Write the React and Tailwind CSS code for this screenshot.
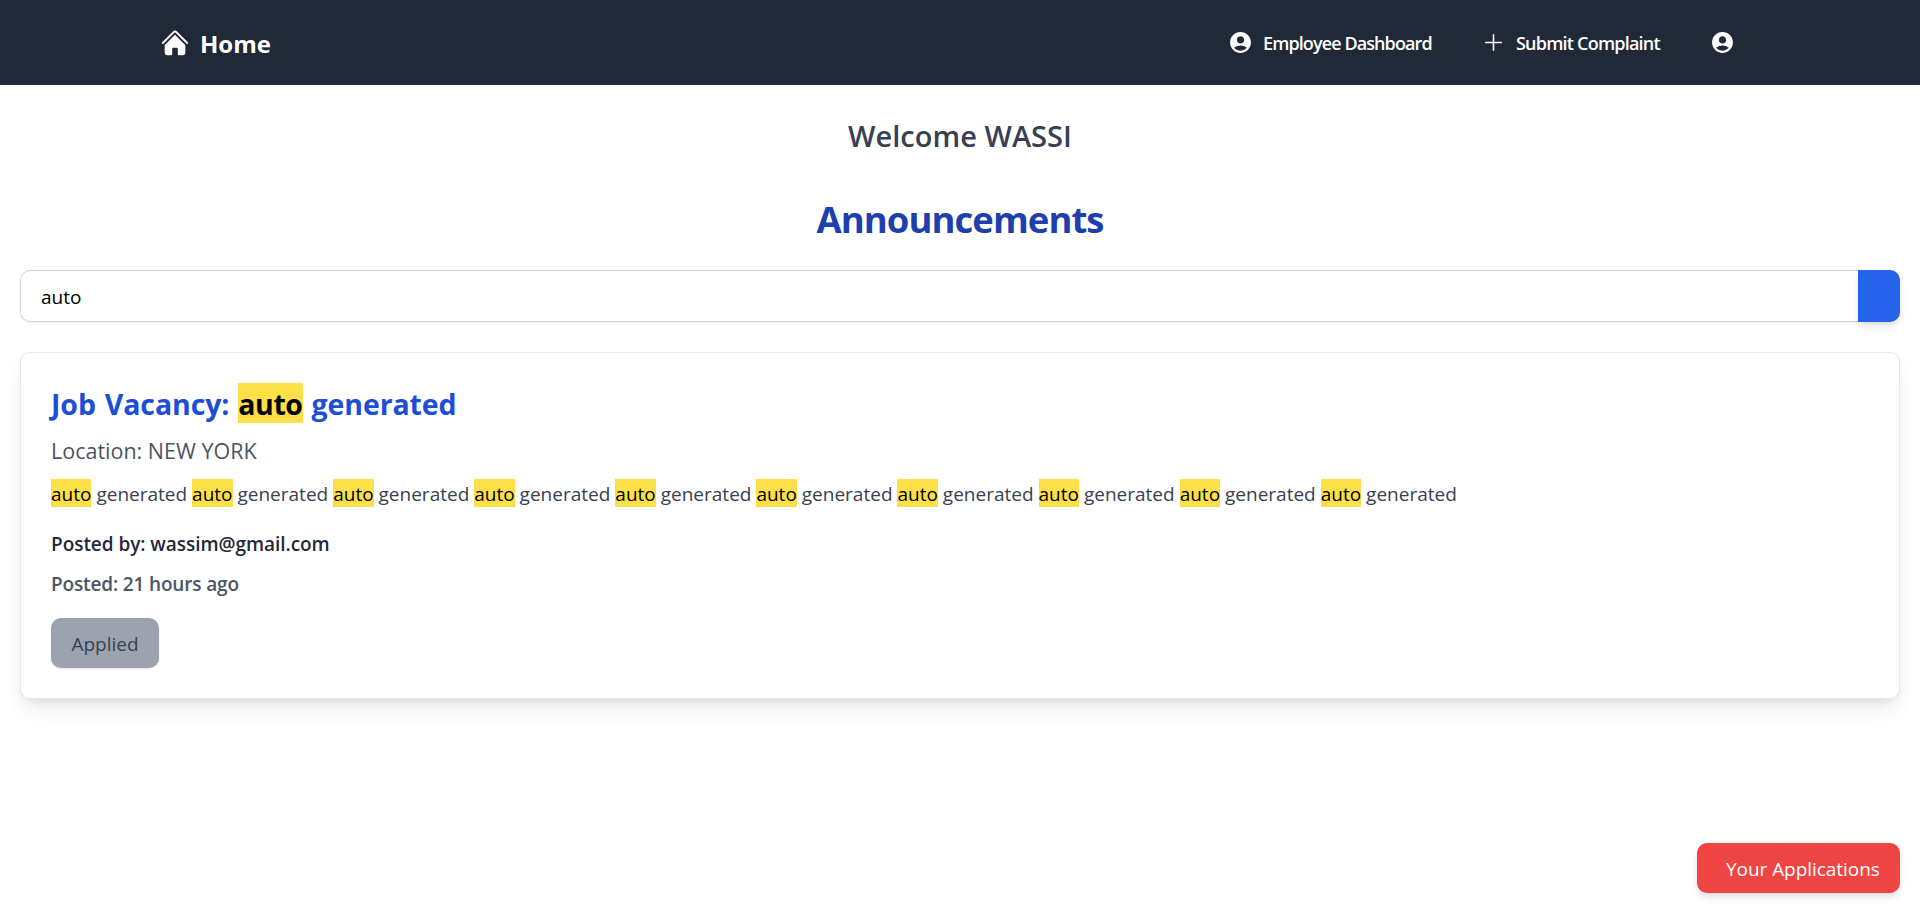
import { HiHome, HiOutlinePlus } from "react-icons/hi2";
import { MdAccountCircle } from "react-icons/md";

const Mark = ({ children }) => (
  <mark className="bg-[#fde047] pt-[2px] text-black">{children}</mark>
);

const repeats = Array.from({ length: 10 }, (_, i) => i);

export default function App() {
  return (
    <div className="flex min-h-[912px] flex-col bg-white font-['Open_Sans','Noto_Sans',sans-serif] text-[19px] leading-[30px]">
      <nav className="flex h-[85px] items-center justify-between bg-[#1f2937] pr-[185px] pl-[160px] text-white">
        <a className="flex items-center gap-[10px] pt-px">
          <HiHome className="size-[30px]" />
          <span className="text-[24px] leading-[35px] font-bold">Home</span>
        </a>
        <div className="flex items-center text-[18px] font-semibold">
          <a className="flex items-center gap-[10px]">
            <MdAccountCircle className="size-[25px]" />
            <span className="w-[170px] pt-px tracking-[-0.9px] whitespace-nowrap">Employee Dashboard</span>
          </a>
          <a className="ml-[48px] flex items-center gap-[10px]">
            <HiOutlinePlus className="size-[25px]" />
            <span className="w-[145px] pt-px tracking-[-0.78px] whitespace-nowrap">Submit Complaint</span>
          </a>
          <a className="ml-[49px]">
            <MdAccountCircle className="size-[25px]" />
          </a>
        </div>
      </nav>
      <main className="px-5">
        <h2 className="mt-[31px] text-center text-[29px] leading-[40px] font-semibold tracking-[0.02px] text-[#374151]">Welcome WASSI</h2>
        <h1 className="mt-[38px] text-center text-[36.5px] leading-[50px] font-bold tracking-[-0.95px] text-[#1e40af]">Announcements</h1>
        <div className="mt-[26px] flex h-[52px]">
          <div className="flex flex-1 items-center rounded-l-[10px] border border-r-0 border-[#d1d5db] px-5 pt-px text-black shadow-[0_1px_2px_rgba(0,0,0,0.05)]">
            auto
          </div>
          <button className="w-[42px] rounded-r-[10px] bg-[#2563eb] shadow-[0_5px_8px_-1px_rgba(0,0,0,0.1),0_2px_5px_-2px_rgba(0,0,0,0.1)]" />
        </div>
        <section className="mt-[30px] h-[347px] rounded-[10px] border border-[#e5e7eb] bg-white px-[30px] pt-[31px] shadow-[0_12px_19px_-4px_rgba(0,0,0,0.1),0_5px_8px_-5px_rgba(0,0,0,0.1)]">
          <h3 className="text-[28.5px] leading-[40px] font-bold tracking-[-0.1px] [word-spacing:1.7px] text-[#1d4ed8]">
            Job Vacancy: <mark className="bg-[#fde047] pt-[2px] tracking-[-0.45px] text-black">auto</mark> generated
          </h3>
          <p className="mt-[9px] text-[21.5px] leading-[35px] text-[#4b5563]">Location: NEW YORK</p>
          <p className="mt-[11px] tracking-[0.006px] text-[#374151]">
            {repeats.map((i) => (
              <span key={i}><Mark>auto</Mark> generated </span>
            ))}
          </p>
          <p className="mt-5 font-semibold tracking-[-0.05px] text-[#1f2937]">Posted by: wassim@gmail.com</p>
          <p className="mt-[10px] font-semibold tracking-[-0.15px] text-[#4b5563]">Posted: 21 hours ago</p>
          <button className="mt-[19px] h-[50px] w-[108px] rounded-[10px] bg-[#9ca3af] pt-px text-[#374151] shadow-[0_1px_2px_rgba(0,0,0,0.1)]">
            Applied
          </button>
        </section>
      </main>
      <button className="mt-[144px] mr-5 flex h-[50px] w-[203px] items-center self-end rounded-[10px] bg-[#ef4444] pt-px pl-[29px] tracking-[-0.05px] whitespace-nowrap text-white shadow-[0_5px_8px_-1px_rgba(0,0,0,0.1),0_2px_5px_-2px_rgba(0,0,0,0.1)]">
        Your Applications
      </button>
    </div>
  );
}
